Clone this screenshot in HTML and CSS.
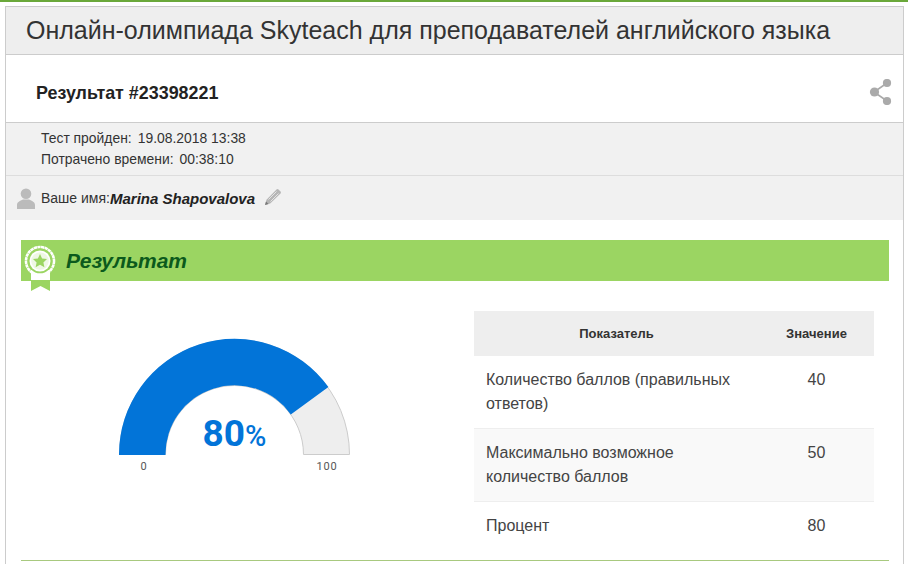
FILE: index.html
```html
<!DOCTYPE html>
<html lang="ru">
<head>
<meta charset="utf-8">
<title>Результат</title>
<link rel="stylesheet" href="styles.css">
</head>
<body>
<div class="topline"></div>
<main class="panel">
  <header class="head"><h1>Онлайн-олимпиада Skyteach для преподавателей английского языка</h1></header>
  <section class="result-id">
    <h2>Результат #23398221</h2>
    <svg class="share" width="24" height="26" viewBox="0 0 24 26"><path d="M18 4 5 13l13 9" fill="none" stroke="#aaa" stroke-width="1.600"/><circle cx="18" cy="4" r="4.100" fill="#aaa"/><circle cx="5.500" cy="13" r="4.600" fill="#aaa"/><circle cx="18" cy="22" r="4.100" fill="#aaa"/></svg>
  </section>
  <section class="meta">
    <p><span>Тест пройден:</span> <span>19.08.2018 13:38</span></p>
    <p><span>Потрачено времени:</span> <span>00:38:10</span></p>
  </section>
  <section class="name">
    <svg width="18" height="21" viewBox="0 0 18 21"><circle cx="9" cy="5.800" r="5.300" fill="#bbb"/><path d="M0 21v-4c0-3 3-4 6-5.500h6c3 1.500 6 2.500 6 5.500v4z" fill="#bbb"/></svg>
    <span class="name-label">Ваше имя:</span><b class="name-value">Marina Shapovalova</b>
    <svg class="pencil" width="18" height="18" viewBox="0 0 18 18"><path d="M1 17l1.500-5.200L12.500 1.500a1.500 1.500 0 0 1 2 0l2 2a1.500 1.500 0 0 1 0 2L6.200 15.500z" fill="#b5b5b5"/><path d="M4.500 11.500l8-8M6.500 13.500l8-8" stroke="#e8e8e8" stroke-width="0.900"/><path d="M1 17l1-3.500 2.500 2.500z" fill="#777"/></svg>
  </section>
  <section class="content">
    <div class="bar">
      <svg class="medal" width="32" height="52" viewBox="0 0 32 52"><path d="M7 25h19v21l-9.500-5L7 46z" fill="#9bd562"/><path d="M7 25h19v10H7z" fill="#fff"/><circle cx="16" cy="16" r="14" fill="none" stroke="#fff" stroke-width="2.600" stroke-dasharray="3.300 .4"/><circle cx="16" cy="16" r="12.300" fill="#9bd562"/><circle cx="16" cy="16" r="10.500" fill="#fff"/><circle cx="16" cy="16" r="8.800" fill="#eef8e4"/><path d="M16 9l2.100 4.500 4.900.6-3.600 3.300 1 4.800-4.400-2.500-4.400 2.500 1-4.800L9 14.100l4.900-.6z" fill="#9bd562"/></svg>
      <h3>Результат</h3>
    </div>
    <div class="columns">
      <div class="gauge">
        <svg width="240" height="150" viewBox="0 0 240 150">
          <path d="M5.500 126.500a115 115 0 0 1 230 0h-46a69 69 0 0 0-138 0z" fill="#eee" stroke="#ccc"/>
          <path d="M5 127a115.500 115.500 0 0 1 209.400-67.900l-37.600 27.300A69 69 0 0 0 51.500 127z" fill="#0274d8"/>
          <text class="g-num" x="120.500" y="118" text-anchor="middle">80<tspan class="g-pct">%</tspan></text>
          <text class="g-lab" x="30" y="142" text-anchor="middle">0</text>
          <text class="g-lab" x="213" y="142" text-anchor="middle">100</text>
        </svg>
      </div>
      <table class="stats">
        <thead><tr><th class="c1">Показатель</th><th class="c2">Значение</th></tr></thead>
        <tbody>
          <tr><td>Количество баллов (правильных ответов)</td><td class="num">40</td></tr>
          <tr class="alt"><td>Максимально возможное количество баллов</td><td class="num">50</td></tr>
          <tr><td>Процент</td><td class="num">80</td></tr>
        </tbody>
      </table>
    </div>
    <div class="divider"></div>
  </section>
</main>
</body>
</html>
```
FILE: styles.css
```css
* { box-sizing: border-box; }
html, body { margin: 0; padding: 0; height: 564px; overflow: hidden; background: #fff; }
body { font-family: "Liberation Sans", Arial, sans-serif; color: #333; }
.topline { height: 2px; background: #6aa83a; }
.panel { margin: 4px 4px 0 5px; height: 558px; overflow: hidden; border: 1px solid #ccc; border-bottom: 0; background: #fff; }
.head { height: 48px; background: #eee; border-bottom: 1px solid #ccc; padding: 8px 0 0 20px; }
h1 { margin: 0; font-size: 25px; line-height: 30px; font-weight: 400; color: #333; white-space: nowrap; }
.result-id { height: 68px; display: flex; align-items: center; justify-content: space-between; padding: 9px 10px 0 30px; border-bottom: 1px solid #ccc; }
h2 { margin: 0; font-size: 17.9px; font-weight: 700; color: #222; }
.share { margin-top: -3px; }
.meta { height: 53px; background: #f1f1f1; border-bottom: 1px solid #ddd; padding: 5px 0 0 35px; line-height: 21px; color: #333; }
.meta p { margin: 0; display: flex; gap: 6px; font-size: 13.9px; }
.name { height: 44px; background: #f1f1f1; display: flex; align-items: center; padding: 0 0 0 11px; font-size: 14px; }
.name-label { margin-left: 6px; }
.name-value { font-size: 15px; font-style: italic; color: #222; }
.pencil { margin-left: 9px; margin-top: -3px; }
.content { padding: 20px 14px 0 15px; }
.bar { position: relative; height: 41px; background: #9bd562; display: flex; align-items: center; padding-left: 45px; }
.medal { position: absolute; left: 3px; top: 5px; }
h3 { margin: 0; font-size: 21px; font-weight: 700; font-style: italic; color: #0b5a1c; }
.columns { display: flex; align-items: flex-start; height: 279px; }
.gauge { width: 453px; padding: 47px 0 0 93px; }
.gauge svg { display: block; }
.g-num { font-family: Roboto, sans-serif; font-size: 37px; font-weight: 700; fill: #0274d8; }
.g-pct { font-size: 29px; font-weight: 500; }
.g-lab { font-family: Roboto, sans-serif; font-size: 11px; letter-spacing: 0.8px; fill: #555; }
.stats { width: 400px; margin-top: 30px; border-collapse: collapse; font-size: 16px; line-height: 24px; color: #444; }
.stats th { height: 45px; background: #eee; font-size: 13px; font-weight: 700; color: #333; padding: 0; }
.stats .c2 { width: 115px; }
.stats td { padding: 12px; vertical-align: top; border-bottom: 1px solid #eee; height: 72px; }
.stats tr:last-child td { border-bottom: 0; height: 48px; }
.stats .num { text-align: center; }
.stats .alt td { background: #f9f9f9; }
.divider { height: 1px; background: #a8c97f; }
```
